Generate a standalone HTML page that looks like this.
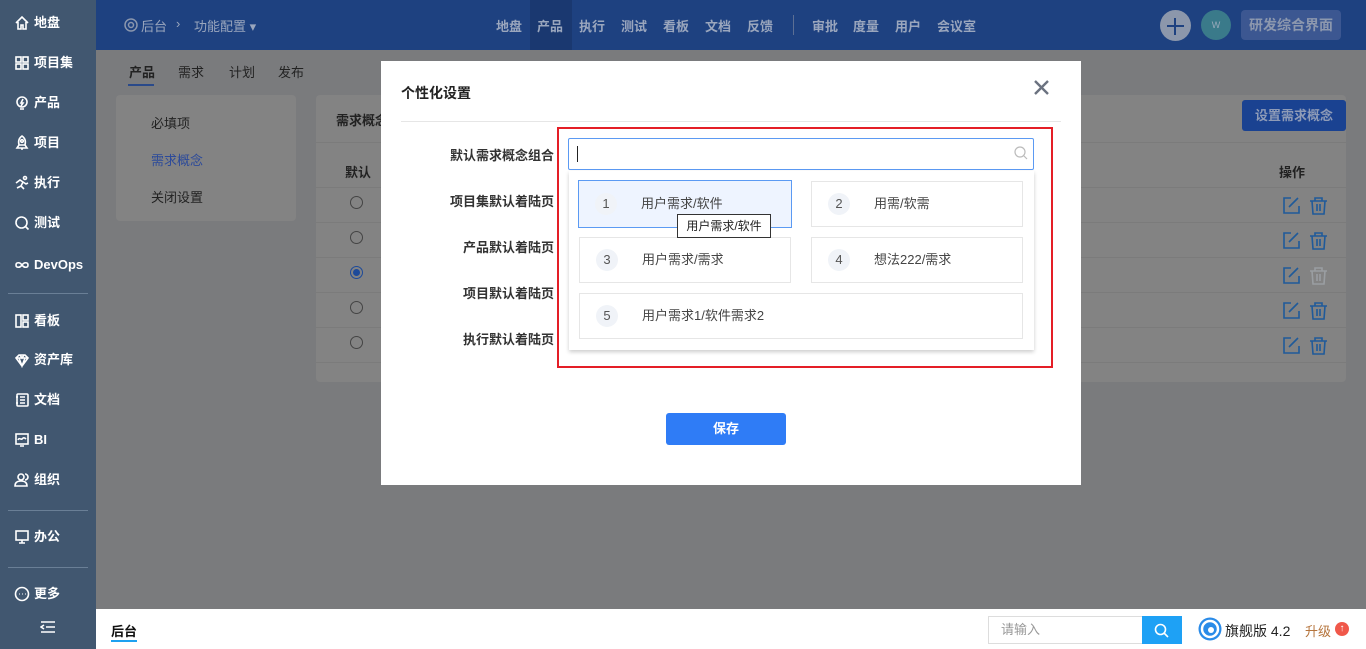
<!DOCTYPE html>
<html><head><meta charset="utf-8"><style>
*{margin:0;padding:0;box-sizing:border-box}
body{width:1366px;height:649px;overflow:hidden;position:relative;background:#7a7b7d;font-family:"Liberation Sans","Noto Sans CJK SC",sans-serif;font-size:13px;color:#333}
.abs{position:absolute}
#side{left:0;top:0;width:96px;height:649px;background:#415770;color:#fff}
.si{position:absolute;left:14px;font-size:13px;font-weight:bold;display:flex;align-items:center;gap:4px;height:20px;line-height:20px}
.si svg{width:16px;height:16px;stroke:#fff;fill:none;stroke-width:1.6}
.sep{position:absolute;left:8px;width:80px;height:1px;background:#6a7f96}
#hdr{left:96px;top:0;width:1270px;height:50px;background:#1e4180}
.nv{position:absolute;top:16px;color:#9aa6bd;font-weight:bold;font-size:13px}
#foot{left:96px;top:609px;width:1270px;height:40px;background:#fff}
.card{background:#838383;border-radius:4px}
.tab{position:absolute;top:62px;font-size:13px;color:#222}
.radio{position:absolute;left:350px;width:13px;height:13px;border:1px solid #444;border-radius:50%}
.row{position:absolute;left:316px;width:1030px;height:1px;background:#7b7b7b}
#modal{left:381px;top:61px;width:700px;height:424px;background:#fff}
.lbl{position:absolute;font-weight:bold;color:#333;font-size:13px;text-align:right}
.it{position:absolute;border:1px solid #e6e6e6;background:#fff;height:46px;display:flex;align-items:center;font-size:13px;color:#444;line-height:22px}
.it .n{width:22px;height:22px;border-radius:50%;background:#f0f3f8;text-align:center;line-height:22px;margin-left:16px;margin-right:24px;color:#555}
.it .t{height:22px;line-height:22px}
</style></head><body>
<div id="side" class="abs">
<div class="si" style="top:13px"><svg viewBox="0 0 16 16"><path d="M2 8L8 2l6 6M4 7v7h3v-4h2v4h3V7"/></svg>地盘</div>
<div class="si" style="top:53px"><svg viewBox="0 0 16 16"><rect x="2" y="2" width="5" height="5"/><rect x="9" y="2" width="5" height="5"/><rect x="2" y="9" width="5" height="5"/><rect x="9" y="9" width="5" height="5"/></svg>项目集</div>
<div class="si" style="top:93px"><svg viewBox="0 0 16 16"><circle cx="8" cy="7" r="5"/><path d="M6 14h4M9 4l-2 4h2l-2 3"/></svg>产品</div>
<div class="si" style="top:133px"><svg viewBox="0 0 16 16"><path d="M8 1c3 2 4 5 3 9H5C4 6 5 3 8 1zM5 10l-2 3h10l-2-3M7 14h2"/><circle cx="8" cy="6" r="1.3"/></svg>项目</div>
<div class="si" style="top:173px"><svg viewBox="0 0 16 16"><circle cx="11" cy="3" r="1.5"/><path d="M2 8l4-3 3 2-2 4 3 3M7 11l-4 2M9 7l3 2 2-1"/></svg>执行</div>
<div class="si" style="top:213px"><svg viewBox="0 0 16 16"><circle cx="7.5" cy="7.5" r="5.5"/><path d="M11.5 11.5l3 3"/></svg>测试</div>
<div class="si" style="top:255px"><svg viewBox="0 0 16 16"><path d="M8 8c-2-3-6-3-6 0s4 3 6 0 6-3 6 0-4 3-6 0"/></svg>DevOps</div>
<div class="sep" style="top:293px"></div>
<div class="si" style="top:311px"><svg viewBox="0 0 16 16"><rect x="2" y="2" width="5" height="12"/><rect x="9" y="2" width="5" height="5"/><rect x="9" y="9" width="5" height="5"/></svg>看板</div>
<div class="si" style="top:350px"><svg viewBox="0 0 16 16"><path d="M2 6l3-3h6l3 3-6 8zM2 6h12M6 3L8 6l2-3M5 6l3 8 3-8"/></svg>资产库</div>
<div class="si" style="top:390px"><svg viewBox="0 0 16 16"><rect x="3" y="2" width="11" height="12" rx="1"/><path d="M6 5h5M6 8h5M6 11h5M2 5h2M2 11h2"/></svg>文档</div>
<div class="si" style="top:430px"><svg viewBox="0 0 16 16"><rect x="2" y="2" width="12" height="10"/><path d="M4 8c1-3 3 0 4-1s2-2 4 0M6 14h4"/></svg>BI</div>
<div class="si" style="top:470px"><svg viewBox="0 0 16 16"><circle cx="7" cy="5" r="3"/><path d="M1 14c0-4 3-5 6-5s6 1 6 5zM11 2a3 3 0 010 6"/></svg>组织</div>
<div class="sep" style="top:510px"></div>
<div class="si" style="top:527px"><svg viewBox="0 0 16 16"><rect x="2" y="2" width="12" height="9"/><path d="M5 14h6M8 11v3"/></svg>办公</div>
<div class="sep" style="top:567px"></div>
<div class="si" style="top:584px"><svg viewBox="0 0 16 16"><circle cx="8" cy="8" r="6.5"/><path d="M5 8h.5M8 8h.5M11 8h.5" stroke-width="2"/></svg>更多</div>
<svg class="abs" style="left:40px;top:620px" width="16" height="14" viewBox="0 0 16 14" stroke="#fff" stroke-width="1.6" fill="none"><path d="M1 2h14M6 7h9M1 12h14M4 5L1 7l3 2"/></svg>
</div>

<div id="hdr" class="abs">
<svg class="abs" style="left:27px;top:17px" width="16" height="16" viewBox="0 0 16 16" fill="none" stroke="#8a96ad" stroke-width="1.5"><circle cx="8" cy="8" r="2.5"/><circle cx="8" cy="8" r="6"/></svg>
<div class="nv" style="left:45px;font-weight:normal">后台</div>
<div class="nv" style="left:80px;font-weight:normal">›</div>
<div class="nv" style="left:98px;font-weight:normal">功能配置 ▾</div>
<div class="abs" style="left:434px;top:0;width:42px;height:50px;background:#1a3870"></div>
<div class="nv" style="left:400px">地盘</div>
<div class="nv" style="left:441px">产品</div>
<div class="nv" style="left:483px">执行</div>
<div class="nv" style="left:525px">测试</div>
<div class="nv" style="left:567px">看板</div>
<div class="nv" style="left:609px">文档</div>
<div class="nv" style="left:651px">反馈</div>
<div class="abs" style="left:697px;top:15px;width:1px;height:20px;background:#5c6f94"></div>
<div class="nv" style="left:716px">审批</div>
<div class="nv" style="left:757px">度量</div>
<div class="nv" style="left:799px">用户</div>
<div class="nv" style="left:841px">会议室</div>
<div class="abs" style="left:1064px;top:10px;width:31px;height:31px;border-radius:50%;background:#8c97ab"></div>
<div class="abs" style="left:1071px;top:25px;width:17px;height:2px;background:#1e4180"></div>
<div class="abs" style="left:1078px;top:18px;width:2px;height:17px;background:#1e4180"></div>
<div class="abs" style="left:1105px;top:10px;width:30px;height:30px;border-radius:50%;background:#3a7a8a;color:#9ab;font-size:9px;text-align:center;line-height:30px">W</div>
<div class="abs" style="left:1145px;top:10px;width:100px;height:30px;border-radius:4px;background:#3c5791;color:#8d98ae;font-weight:bold;font-size:14px;text-align:center;line-height:30px">研发综合界面</div>
</div>

<div class="tab" style="left:129px;font-weight:bold">产品</div>
<div class="abs" style="left:128px;top:84px;width:26px;height:2px;background:#2a4a8a"></div>
<div class="tab" style="left:178px">需求</div>
<div class="tab" style="left:229px">计划</div>
<div class="tab" style="left:278px">发布</div>

<div class="abs card" style="left:116px;top:95px;width:180px;height:126px"></div>
<div class="abs" style="left:151px;top:113px;color:#222">必填项</div>
<div class="abs" style="left:151px;top:150px;color:#2c4a9a">需求概念</div>
<div class="abs" style="left:151px;top:187px;color:#222">关闭设置</div>

<div class="abs card" style="left:316px;top:95px;width:1030px;height:287px"></div>
<div class="abs" style="left:336px;top:110px;font-weight:bold;color:#222">需求概念</div>
<div class="abs" style="left:1242px;top:100px;width:104px;height:31px;border-radius:3px;background:#1a4291;color:#8e9bb7;font-weight:bold;text-align:center;line-height:31px">设置需求概念</div>
<div class="row" style="top:142px"></div>
<div class="abs" style="left:345px;top:162px;font-weight:bold;color:#222">默认</div>
<div class="abs" style="left:1279px;top:162px;font-weight:bold;color:#222">操作</div>
<div class="row" style="top:187px"></div><div class="row" style="top:222px"></div><div class="row" style="top:257px"></div><div class="row" style="top:292px"></div><div class="row" style="top:327px"></div><div class="row" style="top:362px"></div>
<div class="radio" style="top:196px"></div><div class="radio" style="top:231px"></div>
<div class="radio" style="top:266px;border-color:#1d4a9a"><div style="margin:2px;width:7px;height:7px;border-radius:50%;background:#1d4a9a"></div></div>
<div class="radio" style="top:301px"></div><div class="radio" style="top:336px"></div>

<svg class="abs" style="left:1282px;top:196px" width="50" height="160" fill="none" stroke-width="1.6">
<g stroke="#1f5a9a"><path d="M9 2H2v15h15v-7M7 11L16 2"/><path d="M28 5h17M33 5V2h7v3M30 5l1 13h11l1-13M35 8v7M38 8v7"/></g>
<g transform="translate(0,35)" stroke="#1f5a9a"><path d="M9 2H2v15h15v-7M7 11L16 2"/><path d="M28 5h17M33 5V2h7v3M30 5l1 13h11l1-13M35 8v7M38 8v7"/></g>
<g transform="translate(0,70)"><path stroke="#1f5a9a" d="M9 2H2v15h15v-7M7 11L16 2"/><path stroke="#9a9ea2" d="M28 5h17M33 5V2h7v3M30 5l1 13h11l1-13M35 8v7M38 8v7"/></g>
<g transform="translate(0,105)" stroke="#1f5a9a"><path d="M9 2H2v15h15v-7M7 11L16 2"/><path d="M28 5h17M33 5V2h7v3M30 5l1 13h11l1-13M35 8v7M38 8v7"/></g>
<g transform="translate(0,140)" stroke="#1f5a9a"><path d="M9 2H2v15h15v-7M7 11L16 2"/><path d="M28 5h17M33 5V2h7v3M30 5l1 13h11l1-13M35 8v7M38 8v7"/></g>
</svg>

<div id="modal" class="abs"></div>
<div class="abs" style="left:401px;top:83px;font-size:14px;font-weight:bold;color:#222">个性化设置</div>
<svg class="abs" style="left:1034px;top:80px" width="15" height="15" stroke="#6b7280" stroke-width="2.4"><path d="M1 1l13 13M14 1L1 14"/></svg>
<div class="abs" style="left:401px;top:121px;width:660px;height:1px;background:#e6e6e6"></div>
<div class="lbl" style="top:145px;right:812px">默认需求概念组合</div>
<div class="lbl" style="top:191px;right:812px">项目集默认着陆页</div>
<div class="lbl" style="top:237px;right:812px">产品默认着陆页</div>
<div class="lbl" style="top:283px;right:812px">项目默认着陆页</div>
<div class="lbl" style="top:329px;right:812px">执行默认着陆页</div>

<div class="abs" style="left:557px;top:127px;width:496px;height:241px;border:2px solid #e41e26"></div>
<div class="abs" style="left:568px;top:138px;width:466px;height:32px;border:1px solid #5b9af3;border-radius:2px;background:#fff"></div>
<div class="abs" style="left:577px;top:146px;width:1px;height:16px;background:#222"></div>
<svg class="abs" style="left:1014px;top:146px" width="14" height="14" fill="none" stroke="#bbb" stroke-width="1.2"><circle cx="6" cy="6" r="5"/><path d="M10 10l3 3"/></svg>
<div class="abs" style="left:569px;top:171px;width:465px;height:179px;background:#fff;box-shadow:0 2px 4px rgba(0,0,0,.2)"></div>
<div class="it" style="left:578px;top:180px;width:214px;height:48px;background:#eef4ff;border-color:#5b9af3"><span class="n">1</span><span class="t">用户需求/软件</span></div>
<div class="it" style="left:811px;top:181px;width:212px"><span class="n">2</span><span class="t">用需/软需</span></div>
<div class="it" style="left:579px;top:237px;width:212px"><span class="n">3</span><span class="t">用户需求/需求</span></div>
<div class="it" style="left:811px;top:237px;width:212px"><span class="n">4</span><span class="t">想法222/需求</span></div>
<div class="it" style="left:579px;top:293px;width:444px"><span class="n">5</span><span class="t">用户需求1/软件需求2</span></div>
<div class="abs" style="left:677px;top:214px;width:94px;height:24px;border:1px solid #333;background:#fff;font-size:12px;line-height:22px;text-align:center;color:#222">用户需求/软件</div>

<div class="abs" style="left:666px;top:413px;width:120px;height:32px;border-radius:3px;background:#2f7cf6;color:#fff;font-weight:bold;text-align:center;line-height:32px">保存</div>

<div id="foot" class="abs">
<div class="abs" style="left:15px;top:12px;font-weight:bold;color:#111">后台</div>
<div class="abs" style="left:15px;top:31px;width:26px;height:2px;background:#1ea1f0"></div>
<div class="abs" style="left:892px;top:7px;width:155px;height:28px;border:1px solid #ddd;color:#999;padding-left:12px;line-height:26px">请输入</div>
<div class="abs" style="left:1046px;top:7px;width:40px;height:28px;background:#1ea1f5"></div>
<svg class="abs" style="left:1058px;top:14px" width="15" height="15" fill="none" stroke="#fff" stroke-width="1.6"><circle cx="6.5" cy="6.5" r="5"/><path d="M10 10l4 4"/></svg>
<svg class="abs" style="left:1102px;top:8px" width="24" height="24"><circle cx="12" cy="12" r="11.5" fill="#2a8be8"/><circle cx="12" cy="12" r="8" fill="none" stroke="#fff" stroke-width="2.5"/><circle cx="13" cy="13" r="3" fill="#fff"/></svg>
<div class="abs" style="left:1129px;top:12px;color:#222;font-size:14px">旗舰版 4.2</div>
<div class="abs" style="left:1209px;top:12px;color:#b5743c">升级</div>
<div class="abs" style="left:1239px;top:13px;width:14px;height:14px;border-radius:50%;background:#f0584a;color:#fff;font-size:10px;text-align:center;line-height:14px;font-weight:bold">↑</div>
</div>
</body></html>
